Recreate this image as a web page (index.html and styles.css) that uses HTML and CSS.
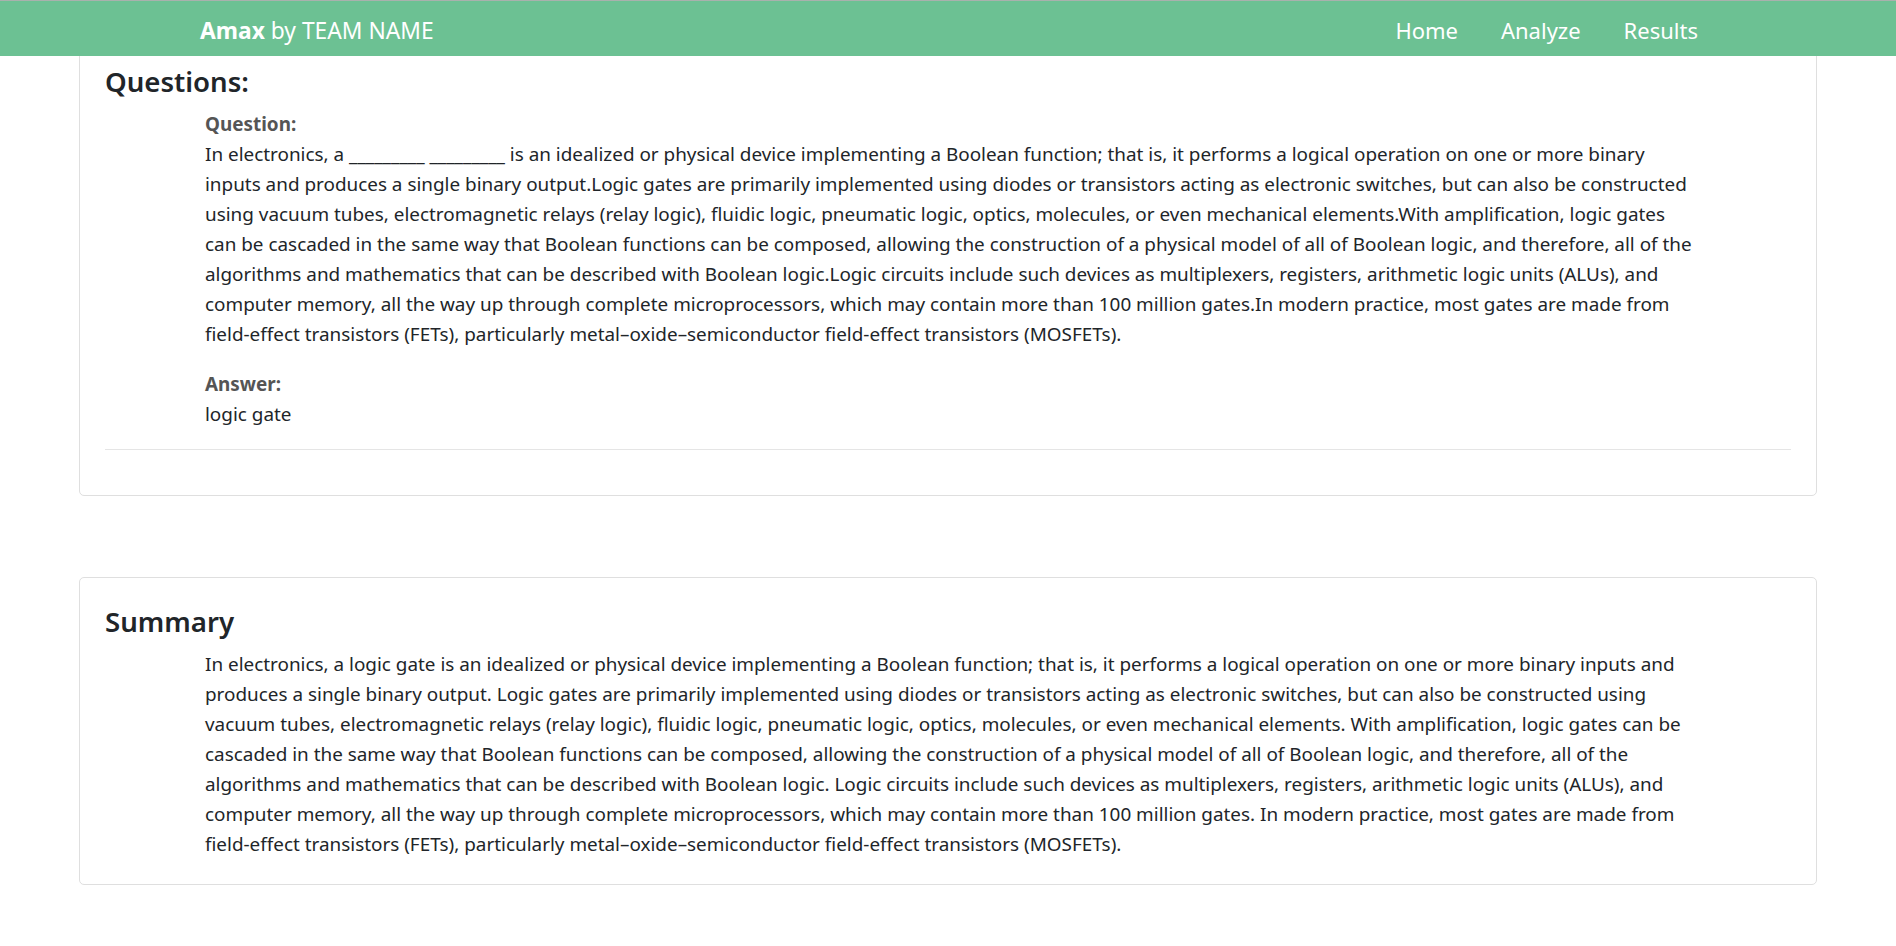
FILE: index.html
```html
<!DOCTYPE html>
<html lang="en">
<head>
<meta charset="utf-8">
<title>Amax by TEAM NAME</title>
<link rel="stylesheet" href="styles.css">
</head>
<body>
<nav class="navbar">
  <a class="brand" href="#"><b>Amax</b> by TEAM NAME</a>
  <ul class="nav-links">
    <li><a href="#">Home</a></li>
    <li><a href="#">Analyze</a></li>
    <li><a href="#">Results</a></li>
  </ul>
</nav>
<main class="page">
  <section class="card">
    <h3 class="card-title">Questions:</h3>
    <div class="qa">
      <div class="label">Question:</div>
      <p class="text para">In electronics, a _________ _________ is an idealized or physical device implementing a Boolean function; that is, it performs a logical operation on one or more binary inputs and produces a single binary output.Logic gates are primarily implemented using diodes or transistors acting as electronic switches, but can also be constructed using vacuum tubes, electromagnetic relays (relay logic), fluidic logic, pneumatic logic, optics, molecules, or even mechanical elements.With amplification, logic gates can be cascaded in the same way that Boolean functions can be composed, allowing the construction of a physical model of all of Boolean logic, and therefore, all of the algorithms and mathematics that can be described with Boolean logic.Logic circuits include such devices as multiplexers, registers, arithmetic logic units (ALUs), and computer memory, all the way up through complete microprocessors, which may contain more than 100 million gates.In modern practice, most gates are made from <span class="nw">field-effect</span> transistors (FETs), particularly metal–oxide–semiconductor field-effect transistors (MOSFETs).</p>
      <div class="label">Answer:</div>
      <p class="text">logic gate</p>
    </div>
    <hr class="divider">
  </section>
  <section class="card">
    <h3 class="card-title">Summary</h3>
    <div class="qa">
      <p class="text">In electronics, a logic gate is an idealized or physical device implementing a Boolean function; that is, it performs a logical operation on one or more binary inputs and produces a single binary output. Logic gates are primarily implemented using diodes or transistors acting as electronic switches, but can also be constructed using vacuum tubes, electromagnetic relays (relay logic), fluidic logic, pneumatic logic, optics, molecules, or even mechanical elements. With amplification, logic gates can be cascaded in the same way that Boolean functions can be composed, allowing the construction of a physical model of all of Boolean logic, and therefore, all of the algorithms and mathematics that can be described with Boolean logic. Logic circuits include such devices as multiplexers, registers, arithmetic logic units (ALUs), and computer memory, all the way up through complete microprocessors, which may contain more than 100 million gates. In modern practice, most gates are made from <span class="nw">field-effect</span> transistors (FETs), particularly metal–oxide–semiconductor field-effect transistors (MOSFETs).</p>
    </div>
  </section>
</main>
</body>
</html>
```
FILE: styles.css
```css
* { box-sizing: border-box; }

html, body {
  margin: 0;
  padding: 0;
  background: #ffffff;
}

body {
  font-family: "Noto Sans", "Open Sans", sans-serif;
  font-size: 18.9px;
  line-height: 30px;
  color: #212529;
}

.navbar {
  position: fixed;
  top: 0;
  left: 0;
  right: 0;
  z-index: 10;
  height: 56px;
  background: #6cc193;
  border-top: 1px solid #a9b1ad;
  display: flex;
  align-items: center;
  justify-content: space-between;
  padding: 4px 198px 0 200px;
}

.brand {
  color: #ffffff;
  text-decoration: none;
  font-size: 22.8px;
  line-height: 30px;
  white-space: nowrap;
}

.brand b { font-weight: 700; }

.nav-links {
  list-style: none;
  margin: 0;
  padding: 0;
  display: flex;
  gap: 43px;
}

.nav-links a {
  color: #ffffff;
  text-decoration: none;
  font-size: 22px;
  line-height: 30px;
}

.page {
  padding: 37px 79px 40px;
  display: flex;
  flex-direction: column;
  gap: 81px;
}

.card {
  border: 1px solid #dfdfdf;
  border-radius: 5px;
  padding: 27px 25px 25px;
  background: #ffffff;
}

.card-title {
  margin: 0 0 11px;
  font-size: 27.6px;
  line-height: 33px;
  font-weight: 600;
  color: #212529;
}

.qa {
  padding: 0 99px 0 100px;
}

.label {
  font-weight: 700;
  color: #555555;
}

.text {
  margin: 0;
}

.para {
  margin-bottom: 20px;
}

.nw {
  white-space: nowrap;
}

.divider {
  border: 0;
  border-top: 1px solid #e5e5e5;
  margin: 20px 0;
}
```
